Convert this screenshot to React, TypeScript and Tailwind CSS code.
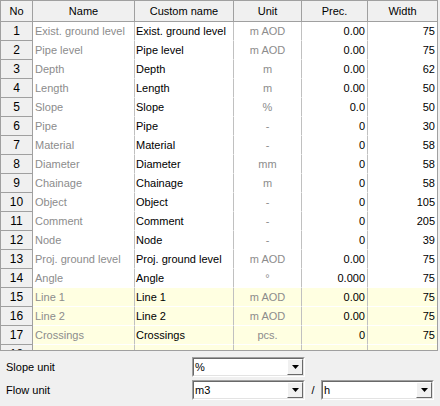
import React from 'react';

type Row = { no: number; name: string; unit: string; prec: string; width: string; hl?: boolean };

const rows: Row[] = [
  { no: 1, name: 'Exist. ground level', unit: 'm AOD', prec: '0.00', width: '75' },
  { no: 2, name: 'Pipe level', unit: 'm AOD', prec: '0.00', width: '75' },
  { no: 3, name: 'Depth', unit: 'm', prec: '0.00', width: '62' },
  { no: 4, name: 'Length', unit: 'm', prec: '0.00', width: '50' },
  { no: 5, name: 'Slope', unit: '%', prec: '0.0', width: '50' },
  { no: 6, name: 'Pipe', unit: '-', prec: '0', width: '30' },
  { no: 7, name: 'Material', unit: '-', prec: '0', width: '58' },
  { no: 8, name: 'Diameter', unit: 'mm', prec: '0', width: '58' },
  { no: 9, name: 'Chainage', unit: 'm', prec: '0', width: '58' },
  { no: 10, name: 'Object', unit: '-', prec: '0', width: '105' },
  { no: 11, name: 'Comment', unit: '-', prec: '0', width: '205' },
  { no: 12, name: 'Node', unit: '-', prec: '0', width: '39' },
  { no: 13, name: 'Proj. ground level', unit: 'm AOD', prec: '0.00', width: '75' },
  { no: 14, name: 'Angle', unit: '°', prec: '0.000', width: '75' },
  { no: 15, name: 'Line 1', unit: 'm AOD', prec: '0.00', width: '75', hl: true },
  { no: 16, name: 'Line 2', unit: 'm AOD', prec: '0.00', width: '75', hl: true },
  { no: 17, name: 'Crossings', unit: 'pcs.', prec: '0', width: '75', hl: true },
  { no: 18, name: 'Flow total', unit: '-', prec: '0', width: '75', hl: true },
];

const head = 'h-[21px] leading-[20px] bg-[#f0f0f0] border-r border-b border-[#a0a0a0] text-center text-black truncate';
const cell = 'h-[19px] leading-[18px] border-r border-b border-r-[#c0c0c0] border-b-white truncate';

function Combo({ value, width }: { value: string; width: string }) {
  return (
    <div className={`${width} h-[20px] border border-t-[#a0a0a0] border-l-[#a0a0a0] border-b-white border-r-white`}>
      <div className="h-full flex bg-white border border-t-[#696969] border-l-[#696969] border-b-[#e3e3e3] border-r-[#e3e3e3]">
        <span className="flex-1 pl-[1px] leading-[16px] text-black">{value}</span>
        <div className="w-[16px] h-[16px] flex items-center justify-center bg-[#f0f0f0] border border-t-white border-l-white border-b-[#696969] border-r-[#696969]">
          <svg width="7" height="4" viewBox="0 0 7 4">
            <path d="M0 0h7L3.5 4z" fill="#000" />
          </svg>
        </div>
      </div>
    </div>
  );
}

export default function App() {
  return (
    <div className="w-[440px] h-[406px] bg-[#f0f0f0] font-['Liberation_Sans',Arial,sans-serif] text-[11px] overflow-hidden">
      <div className="w-[438px] h-[351px] border border-[#a0a0a0] bg-white overflow-hidden">
        <div className="flex">
          <div className={`${head} w-[32px]`}>No</div>
          <div className={`${head} w-[102px]`}>Name</div>
          <div className={`${head} w-[99px]`}>Custom name</div>
          <div className={`${head} w-[68px]`}>Unit</div>
          <div className={`${head} w-[66px]`}>Prec.</div>
          <div className={`${head} w-[69px] border-r-0`}>Width</div>
        </div>
        {rows.map((r) => {
          const bg = r.hl ? 'bg-[#ffffe1]' : 'bg-white';
          return (
            <div key={r.no} className="flex">
              <div className="w-[32px] h-[19px] leading-[18px] bg-[#f0f0f0] border-r border-b border-[#a0a0a0] text-center text-black text-[12px]">
                {r.no}
              </div>
              <div className={`${cell} ${bg} w-[102px] pl-[2px] text-[#8c8c8c]`}>{r.name}</div>
              <div className={`${cell} ${bg} w-[99px] pl-[1px] text-black`}>{r.name}</div>
              <div className={`${cell} ${bg} w-[68px] text-center text-[#8c8c8c]`}>{r.unit}</div>
              <div className={`${cell} ${bg} w-[66px] pr-[2px] text-right text-black`}>{r.prec}</div>
              <div className={`${cell} ${bg} w-[69px] pr-[2px] text-right text-black border-r-0`}>{r.width}</div>
            </div>
          );
        })}
      </div>
      <div className="pl-[6px] pt-[6px] flex flex-col gap-[3px] text-black">
        <div className="flex items-center h-[20px]">
          <span className="w-[186px]">Slope unit</span>
          <Combo value="%" width="w-[113px]" />
        </div>
        <div className="flex items-center h-[20px]">
          <span className="w-[186px]">Flow unit</span>
          <Combo value="m3" width="w-[113px]" />
          <span className="w-[16px] text-center">/</span>
          <Combo value="h" width="w-[113px]" />
        </div>
      </div>
    </div>
  );
}
